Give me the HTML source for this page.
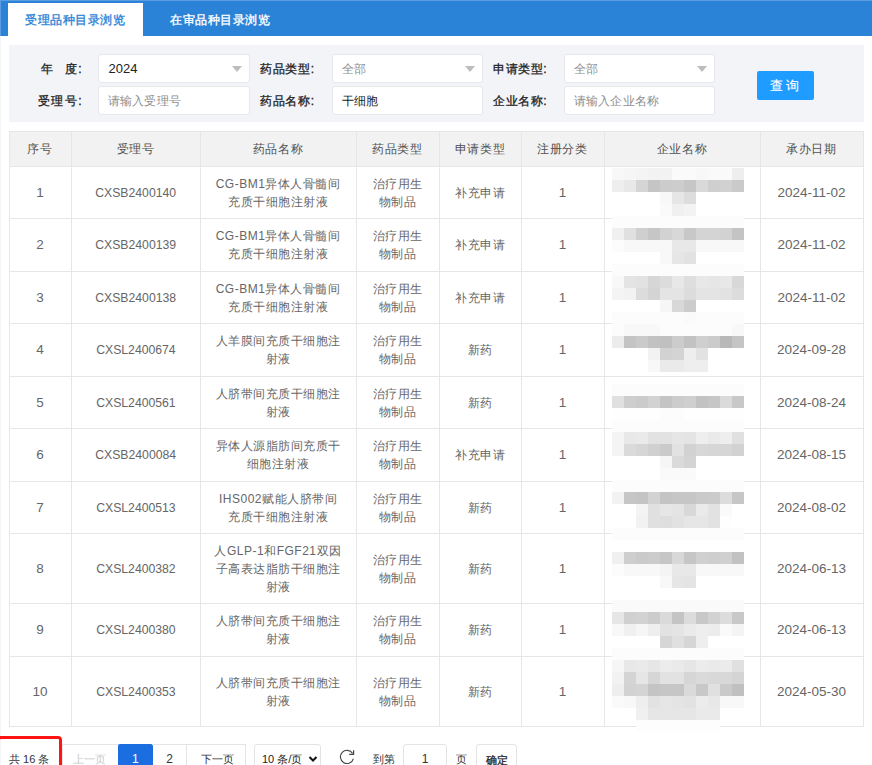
<!DOCTYPE html><html><head><meta charset="utf-8"><style>

*{margin:0;padding:0;box-sizing:border-box}
html,body{width:872px;height:765px;overflow:hidden;background:#fff}
body{position:relative;font-family:"Liberation Sans", sans-serif;}
.a{position:absolute}
.t{position:absolute;white-space:nowrap;font-size:12px;line-height:18px}
.c{text-align:center}

</style></head><body>
<div class="a" style="left:0;top:0;width:872px;height:36px;background:#2b83d7"></div>
<div class="a" style="left:0;top:0;width:872px;height:1px;background:#5c9ce2"></div>
<div class="a" style="left:0;top:0;width:1px;height:36px;background:#5c9ce2"></div>
<div class="a" style="left:0;top:36px;width:1px;height:730px;background:#f5f6f9"></div>
<div class="a" style="left:8px;top:3px;width:135px;height:33px;background:#fff"></div>
<div class="t" style="left:25px;top:11px;color:#2b83d7;font-size:12px;letter-spacing:0.55px;-webkit-text-stroke:0.35px #2b83d7">受理品种目录浏览</div>
<div class="t" style="left:170px;top:11px;color:#fff;font-size:12px;letter-spacing:0.55px;-webkit-text-stroke:0.35px #fff">在审品种目录浏览</div>
<div class="a" style="left:9px;top:45px;width:855px;height:77px;background:#f3f4f8"></div>
<div class="t" style="right:789.0px;top:92px;color:#222;-webkit-text-stroke:0.3px #222;letter-spacing:1.5px">受理号:</div>
<div class="t" style="right:557.4px;top:60px;color:#222;-webkit-text-stroke:0.3px #222;letter-spacing:0.6px">药品类型:</div>
<div class="t" style="right:557.4px;top:92px;color:#222;-webkit-text-stroke:0.3px #222;letter-spacing:0.6px">药品名称:</div>
<div class="t" style="right:325.0px;top:60px;color:#222;-webkit-text-stroke:0.3px #222;letter-spacing:0.5px">申请类型:</div>
<div class="t" style="right:325.0px;top:92px;color:#222;-webkit-text-stroke:0.3px #222;letter-spacing:0.5px">企业名称:</div>
<div class="t" style="left:40.5px;top:60px;color:#222;-webkit-text-stroke:0.3px #222;">年</div>
<div class="t" style="right:789.0px;top:60px;color:#222;-webkit-text-stroke:0.3px #222;letter-spacing:1.5px">度:</div>
<div class="a" style="left:98px;top:54px;width:152px;height:29px;background:#fff;border-radius:3px;border:1px solid #e6e8ec"></div>
<div class="t" style="left:108.5px;top:59.5px;color:#222;font-size:13px;letter-spacing:0">2024</div>
<div class="a" style="left:232px;top:66px;width:0;height:0;border-left:5px solid transparent;border-right:5px solid transparent;border-top:6px solid #bdbdbd"></div>
<div class="a" style="left:98px;top:86px;width:152px;height:29px;background:#fff;border-radius:3px;border:1px solid #e6e8ec"></div>
<div class="t" style="left:107.5px;top:91.5px;color:#8e8e8e;font-size:12px;letter-spacing:0.3px">请输入受理号</div>
<div class="a" style="left:332px;top:54px;width:151px;height:29px;background:#fff;border-radius:3px;border:1px solid #e6e8ec"></div>
<div class="t" style="left:341.5px;top:59.5px;color:#8e8e8e;font-size:12px;letter-spacing:0.3px">全部</div>
<div class="a" style="left:465px;top:66px;width:0;height:0;border-left:5px solid transparent;border-right:5px solid transparent;border-top:6px solid #bdbdbd"></div>
<div class="a" style="left:332px;top:86px;width:151px;height:29px;background:#fff;border-radius:3px;border:1px solid #e6e8ec"></div>
<div class="t" style="left:341.5px;top:91.5px;color:#222;font-size:12px;letter-spacing:0">干细胞</div>
<div class="a" style="left:564px;top:54px;width:151px;height:29px;background:#fff;border-radius:3px;border:1px solid #e6e8ec"></div>
<div class="t" style="left:573.5px;top:59.5px;color:#8e8e8e;font-size:12px;letter-spacing:0.3px">全部</div>
<div class="a" style="left:697px;top:66px;width:0;height:0;border-left:5px solid transparent;border-right:5px solid transparent;border-top:6px solid #bdbdbd"></div>
<div class="a" style="left:564px;top:86px;width:151px;height:29px;background:#fff;border-radius:3px;border:1px solid #e6e8ec"></div>
<div class="t" style="left:573.5px;top:91.5px;color:#8e8e8e;font-size:12px;letter-spacing:0.3px">请输入企业名称</div>
<div class="a" style="left:757px;top:71px;width:57px;height:29px;background:#1f9cff;border-radius:2px"></div>
<div class="t" style="left:769.5px;top:76.5px;color:#fff;font-size:12.5px;-webkit-text-stroke:0.15px #fff;letter-spacing:0">查 询</div>
<div class="a" style="left:9px;top:131px;width:854px;height:35px;background:#f2f2f2"></div>
<div class="a" style="left:9px;top:131px;width:855px;height:1px;background:#e6e6e6"></div>
<div class="a" style="left:9px;top:166px;width:855px;height:1px;background:#e6e6e6"></div>
<div class="a" style="left:9px;top:218px;width:855px;height:1px;background:#e6e6e6"></div>
<div class="a" style="left:9px;top:271px;width:855px;height:1px;background:#e6e6e6"></div>
<div class="a" style="left:9px;top:323px;width:855px;height:1px;background:#e6e6e6"></div>
<div class="a" style="left:9px;top:376px;width:855px;height:1px;background:#e6e6e6"></div>
<div class="a" style="left:9px;top:428px;width:855px;height:1px;background:#e6e6e6"></div>
<div class="a" style="left:9px;top:481px;width:855px;height:1px;background:#e6e6e6"></div>
<div class="a" style="left:9px;top:533px;width:855px;height:1px;background:#e6e6e6"></div>
<div class="a" style="left:9px;top:603px;width:855px;height:1px;background:#e6e6e6"></div>
<div class="a" style="left:9px;top:656px;width:855px;height:1px;background:#e6e6e6"></div>
<div class="a" style="left:9px;top:726px;width:855px;height:1px;background:#e6e6e6"></div>
<div class="a" style="left:9px;top:131px;width:1px;height:596px;background:#e6e6e6"></div>
<div class="a" style="left:71px;top:131px;width:1px;height:596px;background:#e6e6e6"></div>
<div class="a" style="left:200px;top:131px;width:1px;height:596px;background:#e6e6e6"></div>
<div class="a" style="left:356px;top:131px;width:1px;height:596px;background:#e6e6e6"></div>
<div class="a" style="left:439px;top:131px;width:1px;height:596px;background:#e6e6e6"></div>
<div class="a" style="left:521px;top:131px;width:1px;height:596px;background:#e6e6e6"></div>
<div class="a" style="left:604px;top:131px;width:1px;height:596px;background:#e6e6e6"></div>
<div class="a" style="left:760px;top:131px;width:1px;height:596px;background:#e6e6e6"></div>
<div class="a" style="left:863px;top:131px;width:1px;height:596px;background:#e6e6e6"></div>
<div class="t c" style="left:9px;width:62px;top:139.5px;color:#505050;letter-spacing:0.6px">序号</div>
<div class="t c" style="left:71px;width:129px;top:139.5px;color:#505050;letter-spacing:0.6px">受理号</div>
<div class="t c" style="left:200px;width:156px;top:139.5px;color:#505050;letter-spacing:0.6px">药品名称</div>
<div class="t c" style="left:356px;width:83px;top:139.5px;color:#505050;letter-spacing:0.6px">药品类型</div>
<div class="t c" style="left:439px;width:82px;top:139.5px;color:#505050;letter-spacing:0.6px">申请类型</div>
<div class="t c" style="left:521px;width:83px;top:139.5px;color:#505050;letter-spacing:0.6px">注册分类</div>
<div class="t c" style="left:604px;width:156px;top:139.5px;color:#505050;letter-spacing:0.6px">企业名称</div>
<div class="t c" style="left:760px;width:103px;top:139.5px;color:#505050;letter-spacing:0.6px">承办日期</div>
<div class="t c" style="left:9px;width:62px;top:183.5px;color:#666;letter-spacing:0;font-size:13.5px;">1</div>
<div class="t c" style="left:71px;width:129px;top:183.5px;color:#666;letter-spacing:0;font-size:13.5px;"><span style="display:inline-block;transform:scaleX(0.905)">CXSB2400140</span></div>
<div class="t c" style="left:200px;width:156px;top:174.5px;color:#666;letter-spacing:0.5px;">CG-BM1异体人骨髓间<br>充质干细胞注射液</div>
<div class="t c" style="left:356px;width:83px;top:174.5px;color:#666;letter-spacing:0.5px;">治疗用生<br>物制品</div>
<div class="t c" style="left:439px;width:82px;top:183.5px;color:#666;letter-spacing:0.5px;">补充申请</div>
<div class="t c" style="left:521px;width:83px;top:183.5px;color:#666;letter-spacing:0;font-size:13.5px;">1</div>
<div class="t c" style="left:760px;width:103px;top:183.5px;color:#666;letter-spacing:0;font-size:13.5px;">2024-11-02</div>
<div class="t c" style="left:9px;width:62px;top:236.0px;color:#666;letter-spacing:0;font-size:13.5px;">2</div>
<div class="t c" style="left:71px;width:129px;top:236.0px;color:#666;letter-spacing:0;font-size:13.5px;"><span style="display:inline-block;transform:scaleX(0.905)">CXSB2400139</span></div>
<div class="t c" style="left:200px;width:156px;top:227.0px;color:#666;letter-spacing:0.5px;">CG-BM1异体人骨髓间<br>充质干细胞注射液</div>
<div class="t c" style="left:356px;width:83px;top:227.0px;color:#666;letter-spacing:0.5px;">治疗用生<br>物制品</div>
<div class="t c" style="left:439px;width:82px;top:236.0px;color:#666;letter-spacing:0.5px;">补充申请</div>
<div class="t c" style="left:521px;width:83px;top:236.0px;color:#666;letter-spacing:0;font-size:13.5px;">1</div>
<div class="t c" style="left:760px;width:103px;top:236.0px;color:#666;letter-spacing:0;font-size:13.5px;">2024-11-02</div>
<div class="t c" style="left:9px;width:62px;top:288.5px;color:#666;letter-spacing:0;font-size:13.5px;">3</div>
<div class="t c" style="left:71px;width:129px;top:288.5px;color:#666;letter-spacing:0;font-size:13.5px;"><span style="display:inline-block;transform:scaleX(0.905)">CXSB2400138</span></div>
<div class="t c" style="left:200px;width:156px;top:279.5px;color:#666;letter-spacing:0.5px;">CG-BM1异体人骨髓间<br>充质干细胞注射液</div>
<div class="t c" style="left:356px;width:83px;top:279.5px;color:#666;letter-spacing:0.5px;">治疗用生<br>物制品</div>
<div class="t c" style="left:439px;width:82px;top:288.5px;color:#666;letter-spacing:0.5px;">补充申请</div>
<div class="t c" style="left:521px;width:83px;top:288.5px;color:#666;letter-spacing:0;font-size:13.5px;">1</div>
<div class="t c" style="left:760px;width:103px;top:288.5px;color:#666;letter-spacing:0;font-size:13.5px;">2024-11-02</div>
<div class="t c" style="left:9px;width:62px;top:341.0px;color:#666;letter-spacing:0;font-size:13.5px;">4</div>
<div class="t c" style="left:71px;width:129px;top:341.0px;color:#666;letter-spacing:0;font-size:13.5px;"><span style="display:inline-block;transform:scaleX(0.905)">CXSL2400674</span></div>
<div class="t c" style="left:200px;width:156px;top:332.0px;color:#666;letter-spacing:0.5px;">人羊膜间充质干细胞注<br>射液</div>
<div class="t c" style="left:356px;width:83px;top:332.0px;color:#666;letter-spacing:0.5px;">治疗用生<br>物制品</div>
<div class="t c" style="left:439px;width:82px;top:341.0px;color:#666;letter-spacing:0.5px;">新药</div>
<div class="t c" style="left:521px;width:83px;top:341.0px;color:#666;letter-spacing:0;font-size:13.5px;">1</div>
<div class="t c" style="left:760px;width:103px;top:341.0px;color:#666;letter-spacing:0;font-size:13.5px;">2024-09-28</div>
<div class="t c" style="left:9px;width:62px;top:393.5px;color:#666;letter-spacing:0;font-size:13.5px;">5</div>
<div class="t c" style="left:71px;width:129px;top:393.5px;color:#666;letter-spacing:0;font-size:13.5px;"><span style="display:inline-block;transform:scaleX(0.905)">CXSL2400561</span></div>
<div class="t c" style="left:200px;width:156px;top:384.5px;color:#666;letter-spacing:0.5px;">人脐带间充质干细胞注<br>射液</div>
<div class="t c" style="left:356px;width:83px;top:384.5px;color:#666;letter-spacing:0.5px;">治疗用生<br>物制品</div>
<div class="t c" style="left:439px;width:82px;top:393.5px;color:#666;letter-spacing:0.5px;">新药</div>
<div class="t c" style="left:521px;width:83px;top:393.5px;color:#666;letter-spacing:0;font-size:13.5px;">1</div>
<div class="t c" style="left:760px;width:103px;top:393.5px;color:#666;letter-spacing:0;font-size:13.5px;">2024-08-24</div>
<div class="t c" style="left:9px;width:62px;top:446.0px;color:#666;letter-spacing:0;font-size:13.5px;">6</div>
<div class="t c" style="left:71px;width:129px;top:446.0px;color:#666;letter-spacing:0;font-size:13.5px;"><span style="display:inline-block;transform:scaleX(0.905)">CXSB2400084</span></div>
<div class="t c" style="left:200px;width:156px;top:437.0px;color:#666;letter-spacing:0.5px;">异体人源脂肪间充质干<br>细胞注射液</div>
<div class="t c" style="left:356px;width:83px;top:437.0px;color:#666;letter-spacing:0.5px;">治疗用生<br>物制品</div>
<div class="t c" style="left:439px;width:82px;top:446.0px;color:#666;letter-spacing:0.5px;">补充申请</div>
<div class="t c" style="left:521px;width:83px;top:446.0px;color:#666;letter-spacing:0;font-size:13.5px;">1</div>
<div class="t c" style="left:760px;width:103px;top:446.0px;color:#666;letter-spacing:0;font-size:13.5px;">2024-08-15</div>
<div class="t c" style="left:9px;width:62px;top:498.5px;color:#666;letter-spacing:0;font-size:13.5px;">7</div>
<div class="t c" style="left:71px;width:129px;top:498.5px;color:#666;letter-spacing:0;font-size:13.5px;"><span style="display:inline-block;transform:scaleX(0.905)">CXSL2400513</span></div>
<div class="t c" style="left:200px;width:156px;top:489.5px;color:#666;letter-spacing:0.5px;">IHS002赋能人脐带间<br>充质干细胞注射液</div>
<div class="t c" style="left:356px;width:83px;top:489.5px;color:#666;letter-spacing:0.5px;">治疗用生<br>物制品</div>
<div class="t c" style="left:439px;width:82px;top:498.5px;color:#666;letter-spacing:0.5px;">新药</div>
<div class="t c" style="left:521px;width:83px;top:498.5px;color:#666;letter-spacing:0;font-size:13.5px;">1</div>
<div class="t c" style="left:760px;width:103px;top:498.5px;color:#666;letter-spacing:0;font-size:13.5px;">2024-08-02</div>
<div class="t c" style="left:9px;width:62px;top:559.5px;color:#666;letter-spacing:0;font-size:13.5px;">8</div>
<div class="t c" style="left:71px;width:129px;top:559.5px;color:#666;letter-spacing:0;font-size:13.5px;"><span style="display:inline-block;transform:scaleX(0.905)">CXSL2400382</span></div>
<div class="t c" style="left:200px;width:156px;top:541.5px;color:#666;letter-spacing:0.5px;">人GLP-1和FGF21双因<br>子高表达脂肪干细胞注<br>射液</div>
<div class="t c" style="left:356px;width:83px;top:550.5px;color:#666;letter-spacing:0.5px;">治疗用生<br>物制品</div>
<div class="t c" style="left:439px;width:82px;top:559.5px;color:#666;letter-spacing:0.5px;">新药</div>
<div class="t c" style="left:521px;width:83px;top:559.5px;color:#666;letter-spacing:0;font-size:13.5px;">1</div>
<div class="t c" style="left:760px;width:103px;top:559.5px;color:#666;letter-spacing:0;font-size:13.5px;">2024-06-13</div>
<div class="t c" style="left:9px;width:62px;top:621.0px;color:#666;letter-spacing:0;font-size:13.5px;">9</div>
<div class="t c" style="left:71px;width:129px;top:621.0px;color:#666;letter-spacing:0;font-size:13.5px;"><span style="display:inline-block;transform:scaleX(0.905)">CXSL2400380</span></div>
<div class="t c" style="left:200px;width:156px;top:612.0px;color:#666;letter-spacing:0.5px;">人脐带间充质干细胞注<br>射液</div>
<div class="t c" style="left:356px;width:83px;top:612.0px;color:#666;letter-spacing:0.5px;">治疗用生<br>物制品</div>
<div class="t c" style="left:439px;width:82px;top:621.0px;color:#666;letter-spacing:0.5px;">新药</div>
<div class="t c" style="left:521px;width:83px;top:621.0px;color:#666;letter-spacing:0;font-size:13.5px;">1</div>
<div class="t c" style="left:760px;width:103px;top:621.0px;color:#666;letter-spacing:0;font-size:13.5px;">2024-06-13</div>
<div class="t c" style="left:9px;width:62px;top:682.5px;color:#666;letter-spacing:0;font-size:13.5px;">10</div>
<div class="t c" style="left:71px;width:129px;top:682.5px;color:#666;letter-spacing:0;font-size:13.5px;"><span style="display:inline-block;transform:scaleX(0.905)">CXSL2400353</span></div>
<div class="t c" style="left:200px;width:156px;top:673.5px;color:#666;letter-spacing:0.5px;">人脐带间充质干细胞注<br>射液</div>
<div class="t c" style="left:356px;width:83px;top:673.5px;color:#666;letter-spacing:0.5px;">治疗用生<br>物制品</div>
<div class="t c" style="left:439px;width:82px;top:682.5px;color:#666;letter-spacing:0.5px;">新药</div>
<div class="t c" style="left:521px;width:83px;top:682.5px;color:#666;letter-spacing:0;font-size:13.5px;">1</div>
<div class="t c" style="left:760px;width:103px;top:682.5px;color:#666;letter-spacing:0;font-size:13.5px;">2024-05-30</div>
<div class="a" style="left:612px;top:168px;width:12px;height:12px;background:#f8f8f8"></div>
<div class="a" style="left:624px;top:168px;width:12px;height:12px;background:#f6f6f6"></div>
<div class="a" style="left:636px;top:168px;width:12px;height:12px;background:#f4f4f4"></div>
<div class="a" style="left:648px;top:168px;width:24px;height:12px;background:#f2f2f2"></div>
<div class="a" style="left:672px;top:168px;width:24px;height:12px;background:#fafafa"></div>
<div class="a" style="left:696px;top:168px;width:12px;height:12px;background:#f8f8f8"></div>
<div class="a" style="left:708px;top:168px;width:24px;height:12px;background:#fafafa"></div>
<div class="a" style="left:732px;top:168px;width:12px;height:12px;background:#eeeeee"></div>
<div class="a" style="left:612px;top:180px;width:12px;height:12px;background:#eeeeee"></div>
<div class="a" style="left:624px;top:180px;width:12px;height:12px;background:#e8e8e8"></div>
<div class="a" style="left:636px;top:180px;width:12px;height:12px;background:#d5d5d5"></div>
<div class="a" style="left:648px;top:180px;width:12px;height:12px;background:#c5c5c5"></div>
<div class="a" style="left:660px;top:180px;width:12px;height:12px;background:#cccccc"></div>
<div class="a" style="left:672px;top:180px;width:12px;height:12px;background:#cdcdcd"></div>
<div class="a" style="left:684px;top:180px;width:12px;height:12px;background:#c6c6c6"></div>
<div class="a" style="left:696px;top:180px;width:12px;height:12px;background:#d9d9d9"></div>
<div class="a" style="left:708px;top:180px;width:12px;height:12px;background:#cfcfcf"></div>
<div class="a" style="left:720px;top:180px;width:12px;height:12px;background:#d1d1d1"></div>
<div class="a" style="left:732px;top:180px;width:12px;height:12px;background:#cacaca"></div>
<div class="a" style="left:660px;top:192px;width:12px;height:12px;background:#f8f8f8"></div>
<div class="a" style="left:672px;top:192px;width:12px;height:12px;background:#e6e6e6"></div>
<div class="a" style="left:684px;top:192px;width:12px;height:12px;background:#dddddd"></div>
<div class="a" style="left:660px;top:204px;width:12px;height:12px;background:#fafafa"></div>
<div class="a" style="left:672px;top:204px;width:12px;height:12px;background:#f0f0f0"></div>
<div class="a" style="left:684px;top:204px;width:12px;height:12px;background:#f3f3f3"></div>
<div class="a" style="left:612px;top:216px;width:132px;height:12px;background:#fcfcfc"></div>
<div class="a" style="left:612px;top:228px;width:12px;height:12px;background:#f0f0f0"></div>
<div class="a" style="left:624px;top:228px;width:12px;height:12px;background:#e0e0e0"></div>
<div class="a" style="left:636px;top:228px;width:12px;height:12px;background:#cfcfcf"></div>
<div class="a" style="left:648px;top:228px;width:12px;height:12px;background:#c6c6c6"></div>
<div class="a" style="left:660px;top:228px;width:12px;height:12px;background:#d2d2d2"></div>
<div class="a" style="left:672px;top:228px;width:12px;height:12px;background:#d8d8d8"></div>
<div class="a" style="left:684px;top:228px;width:12px;height:12px;background:#c8c8c8"></div>
<div class="a" style="left:696px;top:228px;width:24px;height:12px;background:#d4d4d4"></div>
<div class="a" style="left:720px;top:228px;width:12px;height:12px;background:#d2d2d2"></div>
<div class="a" style="left:732px;top:228px;width:12px;height:12px;background:#c4c4c4"></div>
<div class="a" style="left:612px;top:240px;width:12px;height:12px;background:#fcfcfc"></div>
<div class="a" style="left:624px;top:240px;width:48px;height:12px;background:#f8f8f8"></div>
<div class="a" style="left:672px;top:240px;width:24px;height:12px;background:#e8e8e8"></div>
<div class="a" style="left:696px;top:240px;width:48px;height:12px;background:#f8f8f8"></div>
<div class="a" style="left:660px;top:252px;width:12px;height:12px;background:#f8f8f8"></div>
<div class="a" style="left:672px;top:252px;width:12px;height:12px;background:#e6e6e6"></div>
<div class="a" style="left:684px;top:252px;width:12px;height:12px;background:#e2e2e2"></div>
<div class="a" style="left:612px;top:264px;width:132px;height:12px;background:#fcfcfc"></div>
<div class="a" style="left:612px;top:276px;width:12px;height:12px;background:#f8f8f8"></div>
<div class="a" style="left:624px;top:276px;width:12px;height:12px;background:#e4e4e4"></div>
<div class="a" style="left:636px;top:276px;width:12px;height:12px;background:#e2e2e2"></div>
<div class="a" style="left:648px;top:276px;width:12px;height:12px;background:#d6d6d6"></div>
<div class="a" style="left:660px;top:276px;width:12px;height:12px;background:#dcdcdc"></div>
<div class="a" style="left:672px;top:276px;width:12px;height:12px;background:#e8e8e8"></div>
<div class="a" style="left:684px;top:276px;width:12px;height:12px;background:#dedede"></div>
<div class="a" style="left:696px;top:276px;width:12px;height:12px;background:#e8e8e8"></div>
<div class="a" style="left:708px;top:276px;width:12px;height:12px;background:#e6e6e6"></div>
<div class="a" style="left:720px;top:276px;width:12px;height:12px;background:#e8e8e8"></div>
<div class="a" style="left:732px;top:276px;width:12px;height:12px;background:#d8d8d8"></div>
<div class="a" style="left:612px;top:288px;width:12px;height:12px;background:#f4f4f4"></div>
<div class="a" style="left:624px;top:288px;width:12px;height:12px;background:#f2f2f2"></div>
<div class="a" style="left:636px;top:288px;width:12px;height:12px;background:#dcdcdc"></div>
<div class="a" style="left:648px;top:288px;width:12px;height:12px;background:#d4d4d4"></div>
<div class="a" style="left:660px;top:288px;width:24px;height:12px;background:#e4e4e4"></div>
<div class="a" style="left:684px;top:288px;width:12px;height:12px;background:#dcdcdc"></div>
<div class="a" style="left:696px;top:288px;width:24px;height:12px;background:#e4e4e4"></div>
<div class="a" style="left:720px;top:288px;width:12px;height:12px;background:#e2e2e2"></div>
<div class="a" style="left:732px;top:288px;width:12px;height:12px;background:#dcdcdc"></div>
<div class="a" style="left:660px;top:300px;width:12px;height:12px;background:#f6f6f6"></div>
<div class="a" style="left:672px;top:300px;width:12px;height:12px;background:#d8d8d8"></div>
<div class="a" style="left:684px;top:300px;width:12px;height:12px;background:#cccccc"></div>
<div class="a" style="left:612px;top:312px;width:72px;height:12px;background:#fcfcfc"></div>
<div class="a" style="left:684px;top:312px;width:12px;height:12px;background:#fafafa"></div>
<div class="a" style="left:696px;top:312px;width:48px;height:12px;background:#fcfcfc"></div>
<div class="a" style="left:612px;top:324px;width:12px;height:12px;background:#fcfcfc"></div>
<div class="a" style="left:624px;top:324px;width:36px;height:12px;background:#f8f8f8"></div>
<div class="a" style="left:660px;top:324px;width:72px;height:12px;background:#fcfcfc"></div>
<div class="a" style="left:732px;top:324px;width:12px;height:12px;background:#f8f8f8"></div>
<div class="a" style="left:612px;top:336px;width:12px;height:12px;background:#ececec"></div>
<div class="a" style="left:624px;top:336px;width:12px;height:12px;background:#c4c4c4"></div>
<div class="a" style="left:636px;top:336px;width:12px;height:12px;background:#cacaca"></div>
<div class="a" style="left:648px;top:336px;width:12px;height:12px;background:#c2c2c2"></div>
<div class="a" style="left:660px;top:336px;width:12px;height:12px;background:#c0c0c0"></div>
<div class="a" style="left:672px;top:336px;width:12px;height:12px;background:#cccccc"></div>
<div class="a" style="left:684px;top:336px;width:12px;height:12px;background:#c2c2c2"></div>
<div class="a" style="left:696px;top:336px;width:12px;height:12px;background:#cfcfcf"></div>
<div class="a" style="left:708px;top:336px;width:12px;height:12px;background:#cbcbcb"></div>
<div class="a" style="left:720px;top:336px;width:12px;height:12px;background:#b8b8b8"></div>
<div class="a" style="left:732px;top:336px;width:12px;height:12px;background:#c5c5c5"></div>
<div class="a" style="left:648px;top:348px;width:12px;height:12px;background:#f2f2f2"></div>
<div class="a" style="left:660px;top:348px;width:12px;height:12px;background:#d2d2d2"></div>
<div class="a" style="left:672px;top:348px;width:12px;height:12px;background:#d4d4d4"></div>
<div class="a" style="left:684px;top:348px;width:12px;height:12px;background:#eeeeee"></div>
<div class="a" style="left:696px;top:348px;width:12px;height:12px;background:#e2e2e2"></div>
<div class="a" style="left:648px;top:360px;width:12px;height:12px;background:#f8f8f8"></div>
<div class="a" style="left:660px;top:360px;width:24px;height:12px;background:#eaeaea"></div>
<div class="a" style="left:684px;top:360px;width:24px;height:12px;background:#eeeeee"></div>
<div class="a" style="left:612px;top:384px;width:132px;height:12px;background:#fcfcfc"></div>
<div class="a" style="left:612px;top:396px;width:12px;height:12px;background:#e0e0e0"></div>
<div class="a" style="left:624px;top:396px;width:12px;height:12px;background:#cecece"></div>
<div class="a" style="left:636px;top:396px;width:12px;height:12px;background:#cbcbcb"></div>
<div class="a" style="left:648px;top:396px;width:12px;height:12px;background:#d2d2d2"></div>
<div class="a" style="left:660px;top:396px;width:12px;height:12px;background:#c4c4c4"></div>
<div class="a" style="left:672px;top:396px;width:12px;height:12px;background:#cccccc"></div>
<div class="a" style="left:684px;top:396px;width:12px;height:12px;background:#cfcfcf"></div>
<div class="a" style="left:696px;top:396px;width:12px;height:12px;background:#c2c2c2"></div>
<div class="a" style="left:708px;top:396px;width:12px;height:12px;background:#c6c6c6"></div>
<div class="a" style="left:720px;top:396px;width:12px;height:12px;background:#dadada"></div>
<div class="a" style="left:732px;top:396px;width:12px;height:12px;background:#c8c8c8"></div>
<div class="a" style="left:612px;top:408px;width:48px;height:12px;background:#fefefe"></div>
<div class="a" style="left:660px;top:408px;width:24px;height:12px;background:#fcfcfc"></div>
<div class="a" style="left:684px;top:408px;width:60px;height:12px;background:#fefefe"></div>
<div class="a" style="left:612px;top:420px;width:132px;height:12px;background:#fcfcfc"></div>
<div class="a" style="left:612px;top:432px;width:12px;height:12px;background:#f4f4f4"></div>
<div class="a" style="left:624px;top:432px;width:12px;height:12px;background:#e8e8e8"></div>
<div class="a" style="left:636px;top:432px;width:12px;height:12px;background:#eaeaea"></div>
<div class="a" style="left:648px;top:432px;width:24px;height:12px;background:#e2e2e2"></div>
<div class="a" style="left:672px;top:432px;width:12px;height:12px;background:#e6e6e6"></div>
<div class="a" style="left:684px;top:432px;width:12px;height:12px;background:#e4e4e4"></div>
<div class="a" style="left:696px;top:432px;width:12px;height:12px;background:#eeeeee"></div>
<div class="a" style="left:708px;top:432px;width:12px;height:12px;background:#eaeaea"></div>
<div class="a" style="left:720px;top:432px;width:12px;height:12px;background:#eeeeee"></div>
<div class="a" style="left:732px;top:432px;width:12px;height:12px;background:#e0e0e0"></div>
<div class="a" style="left:612px;top:444px;width:12px;height:12px;background:#f4f4f4"></div>
<div class="a" style="left:624px;top:444px;width:12px;height:12px;background:#dadada"></div>
<div class="a" style="left:636px;top:444px;width:12px;height:12px;background:#d6d6d6"></div>
<div class="a" style="left:648px;top:444px;width:12px;height:12px;background:#d0d0d0"></div>
<div class="a" style="left:660px;top:444px;width:12px;height:12px;background:#cacaca"></div>
<div class="a" style="left:672px;top:444px;width:12px;height:12px;background:#e2e2e2"></div>
<div class="a" style="left:684px;top:444px;width:12px;height:12px;background:#d2d2d2"></div>
<div class="a" style="left:696px;top:444px;width:12px;height:12px;background:#d8d8d8"></div>
<div class="a" style="left:708px;top:444px;width:24px;height:12px;background:#d6d6d6"></div>
<div class="a" style="left:732px;top:444px;width:12px;height:12px;background:#d2d2d2"></div>
<div class="a" style="left:660px;top:456px;width:12px;height:12px;background:#f6f6f6"></div>
<div class="a" style="left:672px;top:456px;width:12px;height:12px;background:#dadada"></div>
<div class="a" style="left:684px;top:456px;width:12px;height:12px;background:#d4d4d4"></div>
<div class="a" style="left:660px;top:468px;width:36px;height:12px;background:#fafafa"></div>
<div class="a" style="left:612px;top:480px;width:132px;height:12px;background:#fcfcfc"></div>
<div class="a" style="left:612px;top:492px;width:12px;height:12px;background:#f2f2f2"></div>
<div class="a" style="left:624px;top:492px;width:12px;height:12px;background:#c6c6c6"></div>
<div class="a" style="left:636px;top:492px;width:12px;height:12px;background:#c4c4c4"></div>
<div class="a" style="left:648px;top:492px;width:12px;height:12px;background:#d2d2d2"></div>
<div class="a" style="left:660px;top:492px;width:12px;height:12px;background:#c4c4c4"></div>
<div class="a" style="left:672px;top:492px;width:24px;height:12px;background:#c6c6c6"></div>
<div class="a" style="left:696px;top:492px;width:12px;height:12px;background:#cacaca"></div>
<div class="a" style="left:708px;top:492px;width:12px;height:12px;background:#cbcbcb"></div>
<div class="a" style="left:720px;top:492px;width:12px;height:12px;background:#dcdcdc"></div>
<div class="a" style="left:732px;top:492px;width:12px;height:12px;background:#c6c6c6"></div>
<div class="a" style="left:636px;top:504px;width:12px;height:12px;background:#f4f4f4"></div>
<div class="a" style="left:648px;top:504px;width:12px;height:12px;background:#e0e0e0"></div>
<div class="a" style="left:660px;top:504px;width:12px;height:12px;background:#e6e6e6"></div>
<div class="a" style="left:672px;top:504px;width:12px;height:12px;background:#e4e4e4"></div>
<div class="a" style="left:684px;top:504px;width:12px;height:12px;background:#d8d8d8"></div>
<div class="a" style="left:696px;top:504px;width:12px;height:12px;background:#eaeaea"></div>
<div class="a" style="left:708px;top:504px;width:12px;height:12px;background:#e2e2e2"></div>
<div class="a" style="left:720px;top:504px;width:12px;height:12px;background:#fafafa"></div>
<div class="a" style="left:636px;top:516px;width:12px;height:12px;background:#f2f2f2"></div>
<div class="a" style="left:648px;top:516px;width:12px;height:12px;background:#e0e0e0"></div>
<div class="a" style="left:660px;top:516px;width:12px;height:12px;background:#dedede"></div>
<div class="a" style="left:672px;top:516px;width:12px;height:12px;background:#e2e2e2"></div>
<div class="a" style="left:684px;top:516px;width:24px;height:12px;background:#e6e6e6"></div>
<div class="a" style="left:708px;top:516px;width:12px;height:12px;background:#e2e2e2"></div>
<div class="a" style="left:720px;top:516px;width:12px;height:12px;background:#fefefe"></div>
<div class="a" style="left:612px;top:528px;width:132px;height:12px;background:#fcfcfc"></div>
<div class="a" style="left:612px;top:552px;width:12px;height:12px;background:#f0f0f0"></div>
<div class="a" style="left:624px;top:552px;width:12px;height:12px;background:#cecece"></div>
<div class="a" style="left:636px;top:552px;width:12px;height:12px;background:#cacaca"></div>
<div class="a" style="left:648px;top:552px;width:12px;height:12px;background:#cccccc"></div>
<div class="a" style="left:660px;top:552px;width:12px;height:12px;background:#c6c6c6"></div>
<div class="a" style="left:672px;top:552px;width:12px;height:12px;background:#d8d8d8"></div>
<div class="a" style="left:684px;top:552px;width:12px;height:12px;background:#c6c6c6"></div>
<div class="a" style="left:696px;top:552px;width:12px;height:12px;background:#d0d0d0"></div>
<div class="a" style="left:708px;top:552px;width:12px;height:12px;background:#cecece"></div>
<div class="a" style="left:720px;top:552px;width:12px;height:12px;background:#d0d0d0"></div>
<div class="a" style="left:732px;top:552px;width:12px;height:12px;background:#c2c2c2"></div>
<div class="a" style="left:612px;top:564px;width:12px;height:12px;background:#fcfcfc"></div>
<div class="a" style="left:624px;top:564px;width:36px;height:12px;background:#f8f8f8"></div>
<div class="a" style="left:660px;top:564px;width:12px;height:12px;background:#f4f4f4"></div>
<div class="a" style="left:672px;top:564px;width:24px;height:12px;background:#e8e8e8"></div>
<div class="a" style="left:696px;top:564px;width:48px;height:12px;background:#f8f8f8"></div>
<div class="a" style="left:660px;top:576px;width:12px;height:12px;background:#f8f8f8"></div>
<div class="a" style="left:672px;top:576px;width:12px;height:12px;background:#e6e6e6"></div>
<div class="a" style="left:684px;top:576px;width:12px;height:12px;background:#e4e4e4"></div>
<div class="a" style="left:612px;top:600px;width:132px;height:12px;background:#fafafa"></div>
<div class="a" style="left:612px;top:612px;width:12px;height:12px;background:#e6e6e6"></div>
<div class="a" style="left:624px;top:612px;width:12px;height:12px;background:#d0d0d0"></div>
<div class="a" style="left:636px;top:612px;width:12px;height:12px;background:#d2d2d2"></div>
<div class="a" style="left:648px;top:612px;width:12px;height:12px;background:#cccccc"></div>
<div class="a" style="left:660px;top:612px;width:12px;height:12px;background:#dadada"></div>
<div class="a" style="left:672px;top:612px;width:12px;height:12px;background:#c4c4c4"></div>
<div class="a" style="left:684px;top:612px;width:12px;height:12px;background:#dcdcdc"></div>
<div class="a" style="left:696px;top:612px;width:12px;height:12px;background:#c8c8c8"></div>
<div class="a" style="left:708px;top:612px;width:12px;height:12px;background:#d2d2d2"></div>
<div class="a" style="left:720px;top:612px;width:12px;height:12px;background:#dcdcdc"></div>
<div class="a" style="left:732px;top:612px;width:12px;height:12px;background:#c8c8c8"></div>
<div class="a" style="left:612px;top:624px;width:12px;height:12px;background:#f8f8f8"></div>
<div class="a" style="left:624px;top:624px;width:12px;height:12px;background:#f0f0f0"></div>
<div class="a" style="left:636px;top:624px;width:12px;height:12px;background:#f6f6f6"></div>
<div class="a" style="left:648px;top:624px;width:12px;height:12px;background:#eeeeee"></div>
<div class="a" style="left:660px;top:624px;width:12px;height:12px;background:#e2e2e2"></div>
<div class="a" style="left:672px;top:624px;width:12px;height:12px;background:#e4e4e4"></div>
<div class="a" style="left:684px;top:624px;width:12px;height:12px;background:#eaeaea"></div>
<div class="a" style="left:696px;top:624px;width:12px;height:12px;background:#eeeeee"></div>
<div class="a" style="left:708px;top:624px;width:12px;height:12px;background:#ececec"></div>
<div class="a" style="left:720px;top:624px;width:12px;height:12px;background:#fafafa"></div>
<div class="a" style="left:732px;top:624px;width:12px;height:12px;background:#f4f4f4"></div>
<div class="a" style="left:660px;top:636px;width:12px;height:12px;background:#d6d6d6"></div>
<div class="a" style="left:672px;top:636px;width:12px;height:12px;background:#e0e0e0"></div>
<div class="a" style="left:684px;top:636px;width:12px;height:12px;background:#d6d6d6"></div>
<div class="a" style="left:696px;top:636px;width:12px;height:12px;background:#eeeeee"></div>
<div class="a" style="left:612px;top:648px;width:132px;height:12px;background:#fcfcfc"></div>
<div class="a" style="left:612px;top:660px;width:12px;height:12px;background:#f6f6f6"></div>
<div class="a" style="left:624px;top:660px;width:12px;height:12px;background:#e8e8e8"></div>
<div class="a" style="left:636px;top:660px;width:12px;height:12px;background:#eaeaea"></div>
<div class="a" style="left:648px;top:660px;width:12px;height:12px;background:#e6e6e6"></div>
<div class="a" style="left:660px;top:660px;width:12px;height:12px;background:#ececec"></div>
<div class="a" style="left:672px;top:660px;width:12px;height:12px;background:#eaeaea"></div>
<div class="a" style="left:684px;top:660px;width:12px;height:12px;background:#e6e6e6"></div>
<div class="a" style="left:696px;top:660px;width:12px;height:12px;background:#ececec"></div>
<div class="a" style="left:708px;top:660px;width:12px;height:12px;background:#eaeaea"></div>
<div class="a" style="left:720px;top:660px;width:12px;height:12px;background:#ebebeb"></div>
<div class="a" style="left:732px;top:660px;width:12px;height:12px;background:#e0e0e0"></div>
<div class="a" style="left:612px;top:672px;width:12px;height:12px;background:#f2f2f2"></div>
<div class="a" style="left:624px;top:672px;width:12px;height:12px;background:#d4d4d4"></div>
<div class="a" style="left:636px;top:672px;width:12px;height:12px;background:#e6e6e6"></div>
<div class="a" style="left:648px;top:672px;width:12px;height:12px;background:#d6d6d6"></div>
<div class="a" style="left:660px;top:672px;width:24px;height:12px;background:#e2e2e2"></div>
<div class="a" style="left:684px;top:672px;width:12px;height:12px;background:#d6d6d6"></div>
<div class="a" style="left:696px;top:672px;width:12px;height:12px;background:#dadada"></div>
<div class="a" style="left:708px;top:672px;width:24px;height:12px;background:#d8d8d8"></div>
<div class="a" style="left:732px;top:672px;width:12px;height:12px;background:#d4d4d4"></div>
<div class="a" style="left:612px;top:684px;width:12px;height:12px;background:#eeeeee"></div>
<div class="a" style="left:624px;top:684px;width:12px;height:12px;background:#d2d2d2"></div>
<div class="a" style="left:636px;top:684px;width:12px;height:12px;background:#d4d4d4"></div>
<div class="a" style="left:648px;top:684px;width:12px;height:12px;background:#c4c4c4"></div>
<div class="a" style="left:660px;top:684px;width:24px;height:12px;background:#c6c6c6"></div>
<div class="a" style="left:684px;top:684px;width:12px;height:12px;background:#dadada"></div>
<div class="a" style="left:696px;top:684px;width:12px;height:12px;background:#c8c8c8"></div>
<div class="a" style="left:708px;top:684px;width:12px;height:12px;background:#e0e0e0"></div>
<div class="a" style="left:720px;top:684px;width:12px;height:12px;background:#cacaca"></div>
<div class="a" style="left:732px;top:684px;width:12px;height:12px;background:#c0c0c0"></div>
<div class="a" style="left:612px;top:696px;width:12px;height:12px;background:#fafafa"></div>
<div class="a" style="left:624px;top:696px;width:12px;height:12px;background:#f8f8f8"></div>
<div class="a" style="left:636px;top:696px;width:12px;height:12px;background:#eeeeee"></div>
<div class="a" style="left:648px;top:696px;width:12px;height:12px;background:#e2e2e2"></div>
<div class="a" style="left:660px;top:696px;width:12px;height:12px;background:#e6e6e6"></div>
<div class="a" style="left:672px;top:696px;width:12px;height:12px;background:#e4e4e4"></div>
<div class="a" style="left:684px;top:696px;width:12px;height:12px;background:#e2e2e2"></div>
<div class="a" style="left:696px;top:696px;width:12px;height:12px;background:#ececec"></div>
<div class="a" style="left:708px;top:696px;width:12px;height:12px;background:#e8e8e8"></div>
<div class="a" style="left:720px;top:696px;width:24px;height:12px;background:#f8f8f8"></div>
<div class="a" style="left:636px;top:708px;width:12px;height:12px;background:#f0f0f0"></div>
<div class="a" style="left:648px;top:708px;width:48px;height:12px;background:#e6e6e6"></div>
<div class="a" style="left:696px;top:708px;width:24px;height:12px;background:#eaeaea"></div>
<div class="a" style="left:636px;top:720px;width:84px;height:12px;background:#fdfdfd"></div>
<div class="a" style="left:62px;top:744px;width:57px;height:30px;border:1px solid #e4e4e4;border-right:none"></div>
<div class="a" style="left:118px;top:744px;width:34.5px;height:30px;background:#1a6ee0;border-radius:2px 2px 0 0"></div>
<div class="a" style="left:152px;top:744px;width:35px;height:30px;border:1px solid #e4e4e4;border-left:none"></div>
<div class="a" style="left:186px;top:744px;width:60px;height:30px;border:1px solid #e4e4e4"></div>
<div class="t" style="left:9px;top:749.5px;color:#333;font-size:11px;">共 16 条</div>
<div class="t" style="left:73px;top:749.5px;color:#c8c8c8;font-size:11px;">上一页</div>
<div class="t c" style="left:118px;width:34.5px;top:749.5px;color:#fff;font-size:12px">1</div>
<div class="t c" style="left:152.5px;width:34px;top:749.5px;color:#333;font-size:12px">2</div>
<div class="t" style="left:201px;top:749.5px;color:#333;font-size:11px;">下一页</div>
<div class="a" style="left:254px;top:744px;width:67px;height:30px;border:1px solid #e4e4e4;border-radius:3px"></div>
<div class="t" style="left:262px;top:749.5px;color:#222;font-size:11px;">10 条/页</div>
<svg class="a" style="left:308px;top:755px" width="10" height="8" viewBox="0 0 10 8"><path d="M1.5 2 L5 5.5 L8.5 2" fill="none" stroke="#111" stroke-width="2"/></svg>
<svg class="a" style="left:330px;top:740px" width="35" height="25" viewBox="0 0 35 25"><path d="M23.4 18.6 A6.6 6.6 0 1 1 22.6 13.4" fill="none" stroke="#444" stroke-width="1.1"/><path d="M19.2 14.3 L23.6 14.3 L23.6 10.2" fill="none" stroke="#444" stroke-width="1.2"/></svg>
<div class="t" style="left:373px;top:749.5px;color:#333;font-size:11px;">到第</div>
<div class="a" style="left:403px;top:744px;width:44px;height:30px;border:1px solid #e4e4e4;border-radius:3px"></div>
<div class="t c" style="left:403px;width:44px;top:749.5px;color:#333;font-size:12px">1</div>
<div class="t" style="left:456px;top:749.5px;color:#333;font-size:11px;">页</div>
<div class="a" style="left:476px;top:744px;width:41px;height:30px;border:1px solid #e4e4e4;border-radius:3px"></div>
<div class="t" style="left:486px;top:750.5px;color:#222;-webkit-text-stroke:0.3px #222;font-size:11px;">确定</div>
<div class="a" style="left:-3px;top:736px;width:65px;height:40px;border:3px solid #ff1414;border-radius:4px"></div>
</body></html>
